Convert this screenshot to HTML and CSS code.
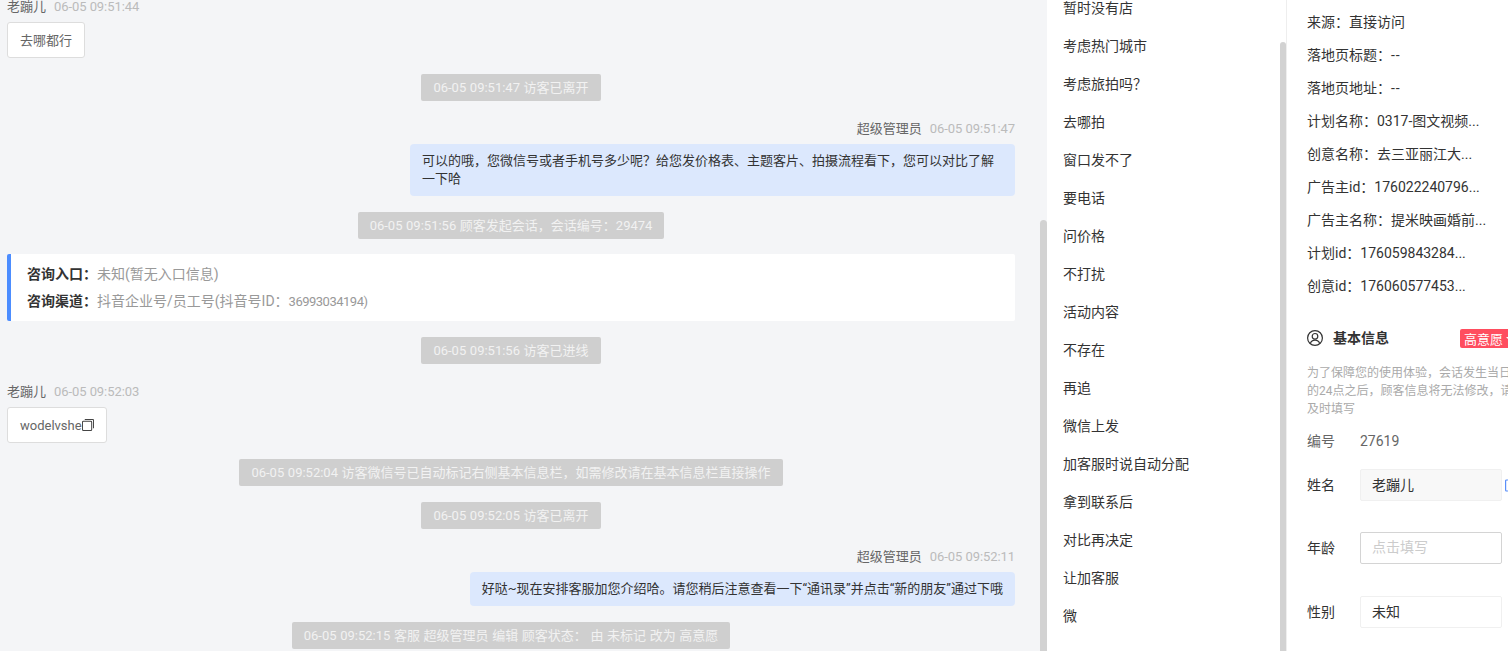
FILE: index.html
```html
<!DOCTYPE html>
<html lang="zh-CN">
<head>
    <meta charset="UTF-8">
    <title>会话详情</title>
    <link rel="stylesheet" href="styles.css">
</head>
<body>
    <div class="chat">
        <div class="chat-list">
            <div class="meta"><span class="name">老蹦儿</span><span class="time">06-05 09:51:44</span></div>
            <div class="item"><div class="box box-text">去哪都行</div></div>
            <div class="item center"><div class="sys">06-05 09:51:47 访客已离开</div></div>
            <div class="meta right"><span class="name">超级管理员</span><span class="time">06-05 09:51:47</span></div>
            <div class="item right"><div class="bubble">可以的哦&#xFF0C;您微信号或者手机号多少呢&#xFF1F;给您发价格表、主题客片、拍摄流程看下&#xFF0C;您可以对比了解一下哈</div></div>
            <div class="item center"><div class="sys">06-05 09:51:56 顾客发起会话&#xFF0C;会话编号&#xFF1A;29474</div></div>
            <div class="item card">
                <div class="card-row"><b>咨询入口&#xFF1A;</b>未知(暂无入口信息)</div>
                <div class="card-row"><b>咨询渠道&#xFF1A;</b>抖音企业号/员工号(抖音号ID&#xFF1A;<span class="card-num">36993034194)</span></div>
            </div>
            <div class="item center"><div class="sys">06-05 09:51:56 访客已进线</div></div>
            <div class="meta"><span class="name">老蹦儿</span><span class="time">06-05 09:52:03</span></div>
            <div class="item">
                <div class="box">wodelvshe<svg class="copy-icon" viewBox="0 0 13 13" width="12" height="12" fill="none" stroke="#444" stroke-width="1.1"><rect x="0.5" y="2.5" width="10" height="10" rx="1"/><path d="M3 0.5h8.5a1 1 0 0 1 1 1V10"/></svg></div>
            </div>
            <div class="item center"><div class="sys">06-05 09:52:04 访客微信号已自动标记右侧基本信息栏&#xFF0C;如需修改请在基本信息栏直接操作</div></div>
            <div class="item center"><div class="sys">06-05 09:52:05 访客已离开</div></div>
            <div class="meta right"><span class="name">超级管理员</span><span class="time">06-05 09:52:11</span></div>
            <div class="item right"><div class="bubble">好哒~现在安排客服加您介绍哈。请您稍后注意查看一下“通讯录”并点击“新的朋友”通过下哦</div></div>
            <div class="item center"><div class="sys">06-05 09:52:15 客服 超级管理员 编辑 顾客状态&#xFF1A; 由 未标记 改为 高意愿</div></div>
        </div>
        <div class="scroll-thumb chat-thumb"></div>
    </div>

    <div class="phrases">
        <ul class="phrase-list">
            <li>暂时没有店</li>
            <li>考虑热门城市</li>
            <li>考虑旅拍吗&#xFF1F;</li>
            <li>去哪拍</li>
            <li>窗口发不了</li>
            <li>要电话</li>
            <li>问价格</li>
            <li>不打扰</li>
            <li>活动内容</li>
            <li>不存在</li>
            <li>再追</li>
            <li>微信上发</li>
            <li>加客服时说自动分配</li>
            <li>拿到联系后</li>
            <li>对比再决定</li>
            <li>让加客服</li>
            <li>微</li>
        </ul>
        <div class="scroll-thumb phrase-thumb"></div>
    </div>

    <div class="info">
        <div class="source">
            <div>来源&#xFF1A;直接访问</div>
            <div>落地页标题&#xFF1A;<span class="dashes">--</span></div>
            <div>落地页地址&#xFF1A;<span class="dashes">--</span></div>
            <div>计划名称&#xFF1A;0317-图文视频...</div>
            <div>创意名称&#xFF1A;去三亚丽江大...</div>
            <div>广告主id&#xFF1A;176022240796...</div>
            <div>广告主名称&#xFF1A;提米映画婚前...</div>
            <div>计划id&#xFF1A;176059843284...</div>
            <div>创意id&#xFF1A;176060577453...</div>
        </div>
        <div class="info-head">
            <svg class="user-icon" viewBox="0 0 16 16" width="16" height="16" fill="none" stroke="#333" stroke-width="1.2"><circle cx="8" cy="8" r="7.4"/><circle cx="8" cy="6.3" r="2.8"/><path d="M3.4 13.4c.7-2.1 2.5-3.2 4.6-3.2s3.9 1.1 4.6 3.2"/></svg>
            <span class="info-title">基本信息</span>
            <span class="badge">高意愿</span>
        </div>
        <p class="notice">为了保障您的使用体验&#xFF0C;会话发生当日的24点之后&#xFF0C;顾客信息将无法修改&#xFF0C;请及时填写</p>
        <div class="field field-plain"><label>编号</label><span class="field-value">27619</span></div>
        <div class="field">
            <label>姓名</label>
            <input class="input input-filled" value="老蹦儿">
            <svg class="edit-icon" viewBox="0 0 12 14" width="12" height="14" fill="none" stroke="#5b8ff9" stroke-width="1.2"><rect x="0.6" y="2" width="10" height="11" rx="1"/><path d="M3 0.6h5"/></svg>
        </div>
        <div class="field"><label>年龄</label><input class="input input-empty" placeholder="点击填写"></div>
        <div class="field"><label>性别</label><input class="input" value="未知"></div>
    </div>
</body>
</html>
```

FILE: styles.css
```css
html, body {
    height: 100%;
}
body {
    margin: 0;
    display: flex;
    height: 651px;
    overflow: hidden;
    font-family: Roboto, "Noto Sans CJK SC", sans-serif;
    font-size: 14px;
    color: #333;
    background-color: #fff;
}
.scroll-thumb {
    flex: none;
    width: 7px;
    background-color: #d2d2d2;
    border-radius: 4px 4px 0 0;
}

/* chat */
.chat {
    flex: none;
    width: 1047px;
    display: flex;
    background-color: #f4f5f7;
    font-size: 13px;
    overflow: hidden;
}
.chat-list {
    flex: 1;
    min-width: 0;
    margin-top: -5px;
    padding: 0 25px 0 7px;
}
.chat-thumb {
    margin-top: 220px;
}
.meta {
    height: 22px;
    line-height: 24px;
    margin-bottom: 5px;
}
.meta.right {
    text-align: right;
}
.name {
    color: #666;
    margin-right: 8px;
}
.time {
    color: #bbb;
    letter-spacing: -0.07px;
}
.item {
    display: flex;
    margin-bottom: 16px;
}
.item.center {
    justify-content: center;
}
.item.right {
    justify-content: flex-end;
}
.box {
    display: flex;
    align-items: center;
    height: 36px;
    box-sizing: border-box;
    padding: 0 12px;
    background: #fff;
    border: 1px solid #ddd;
    border-radius: 3px;
    color: #666;
}
.box-text {
    padding-bottom: 2px;
}
.sys {
    height: 27px;
    line-height: 27px;
    padding: 0 12px;
    background-color: #cfcfcf;
    border-radius: 2px;
    color: #f2f2f2;
    word-spacing: 0.4px;
}
.bubble {
    max-width: 581px;
    padding: 8px 12px;
    line-height: 18px;
    background-color: #dce8fd;
    border-radius: 4px;
}
.card {
    display: block;
    height: 67px;
    box-sizing: border-box;
    margin-top: -1px;
    padding: 7px 16px;
    background: #fff;
    border-left: 4px solid #4c8dff;
    border-radius: 2px;
    font-size: 14px;
    color: #999;
}
.card-row {
    height: 27px;
    line-height: 27px;
}
.card-row b {
    color: #333;
    font-weight: 700;
}
.card-num {
    font-size: 13px;
    letter-spacing: -0.5px;
}

/* quick phrases */
.phrases {
    flex: none;
    width: 240px;
    display: flex;
    box-sizing: border-box;
    border-right: 1px solid #eee;
    overflow: hidden;
}
.phrase-list {
    flex: 1;
    margin: -11px 0 0;
    padding: 0 0 0 16px;
    list-style: none;
}
.phrase-list li {
    height: 38px;
    line-height: 38px;
}
.phrase-thumb {
    width: 6px;
    margin-top: 42px;
}

/* visitor info */
.info {
    flex: 1;
    min-width: 0;
    padding: 6px 0 0 20px;
    overflow: hidden;
}
.source div {
    height: 33px;
    line-height: 33px;
    white-space: nowrap;
}
.dashes {
    letter-spacing: 1px;
}
.info-head {
    display: flex;
    align-items: center;
    width: 213px;
    height: 20px;
    margin-top: 25px;
}
.user-icon {
    flex: none;
}
.info-title {
    margin: 0 0 2px 10px;
    font-weight: 700;
}
.badge {
    display: flex;
    align-items: center;
    margin-left: auto;
    flex: none;
    width: 60px;
    height: 19px;
    padding-left: 4px;
    box-sizing: border-box;
    background-color: #ff4d5f;
    border-radius: 2px;
    font-size: 13px;
    color: #fff;
}
.badge::after {
    content: "";
    margin-left: 3px;
    border: 3px solid transparent;
    border-top-color: #fff;
    border-bottom: 0;
}
.notice {
    width: 208px;
    margin: 16px 0 13px;
    font-size: 12px;
    line-height: 18px;
    color: #aaa;
}
.field {
    display: flex;
    align-items: center;
    width: 220px;
    height: 32px;
    margin-bottom: 31.4px;
}
.field-plain {
    height: 20px;
    margin-bottom: 18px;
    color: #666;
}
.field label {
    flex: none;
    width: 53px;
    margin-bottom: 2px;
}
.field-value {
    color: #666;
}
.input {
    flex: none;
    width: 142px;
    height: 32px;
    box-sizing: border-box;
    padding: 0 11px 2px;
    border: 1px solid #f0f0f0;
    border-radius: 2px;
    outline: none;
    font: inherit;
    color: #333;
    background-color: #fff;
}
.input-filled {
    background-color: #f8f8f8;
}
.input-empty {
    border-color: #d4d4d4;
}
.input-empty::placeholder {
    color: #ccc;
}
.edit-icon {
    flex: none;
    margin-left: 3px;
}
```
